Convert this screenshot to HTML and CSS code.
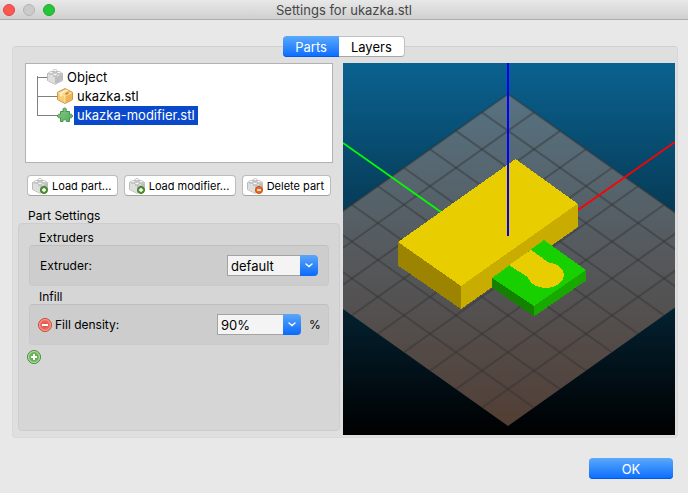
FILE: index.html
```html
<!DOCTYPE html>
<html lang="en">
<head>
<meta charset="utf-8">
<title>Settings for ukazka.stl</title>
<link rel="stylesheet" href="styles.css">
</head>
<body>
<svg class="defs" aria-hidden="true">
  <defs>
    <linearGradient id="sky" x1="0" y1="0" x2="0" y2="1">
      <stop offset="0" stop-color="#0a6290"/><stop offset="1" stop-color="#000"/>
    </linearGradient>
    <linearGradient id="puzzle-fill" x1="0" y1="0" x2="1" y2="1">
      <stop offset="0" stop-color="#86c888"/><stop offset="1" stop-color="#58ab5f"/>
    </linearGradient>
    <radialGradient id="red-fill"><stop offset="0" stop-color="#e2473c"/><stop offset="1" stop-color="#f07d70"/></radialGradient>
    <radialGradient id="green-fill"><stop offset="0" stop-color="#4c9c3c"/><stop offset="1" stop-color="#7fc36c"/></radialGradient>
    <symbol id="brick" viewBox="0 0 16 16">
      <path d="M.5 4.500 8 1.500l7.500 3v7L8 15.300.5 11.500z" fill="#f4f4f4" stroke="#ababab" stroke-width=".8"/>
      <path d="M1 5 8 8.500V15L1 11.300z" fill="#dedede"/>
      <path d="M15 5 8 8.500V15l7-3.700z" fill="#bdbdbd"/>
      <g fill="#d0d0d0" stroke="#a6a6a6" stroke-width=".5">
        <path d="M6 1.700v1.500c0 1.100 4 1.100 4 0V1.700"/><path d="M2 3.700V5c0 1.100 4 1.100 4 0V3.700"/><path d="M10 3.700V5c0 1.100 4 1.100 4 0V3.700"/><path d="M6 5.700v1.500c0 1.100 4 1.100 4 0V5.700"/>
      </g>
      <g fill="#fafafa" stroke="#a6a6a6" stroke-width=".5">
        <ellipse cx="8" cy="1.600" rx="2" ry="1.100"/><ellipse cx="4" cy="3.600" rx="2" ry="1.100"/><ellipse cx="12" cy="3.600" rx="2" ry="1.100"/><ellipse cx="8" cy="5.600" rx="2" ry="1.100"/>
      </g>
    </symbol>
    <symbol id="box" viewBox="0 0 16 16">
      <path d="M.6 4.300 8 .6l7.400 3.700v7.400L8 15.400.6 11.700z" fill="#f9d27f" stroke="#cc8d35" stroke-width="1"/>
      <path d="M1.100 4.700 8 8.200v6.600l-6.900-3.400z" fill="#f8cd78"/>
      <path d="M14.900 4.700 8 8.200v6.600l6.900-3.400z" fill="#efb552"/>
      <path d="M1.200 4.700 8 8.100l6.800-3.400M8 8.100v6.500" fill="none" stroke="#fdebbf" stroke-width=".8"/>
      <path d="M9.500 1.500 3 4.800v3l2 1V5.800l6.500-3.300z" fill="#fff0c8"/>
      <path d="M8.500 4.800l3-1.500v2.800l-3 1.500z" fill="#d8923a"/>
    </symbol>
    <symbol id="puzzle" viewBox="0 0 16 16">
      <path d="M3.500 4.500h3C5.300 2.500 6 1 7.600 1s2.300 1.500 1.100 3.500h3.800v3c1.500-.8 3 0 3 1.500s-1.500 2.300-3 1.500v4H9.400c.8-2.300-4.200-2.300-3.400 0H3.500v-4c-1.500.8-3 0-3-1.500s1.500-2.300 3-1.500z" fill="url(#puzzle-fill)" stroke="#3f974b"/>
    </symbol>
    <symbol id="badge-add" viewBox="0 0 8 8">
      <circle cx="4" cy="4" r="3.500" fill="#559a36" stroke="#3d7d25"/><path d="M4 2v4M2 4h4" stroke="#fff" stroke-width="1.400"/>
    </symbol>
    <symbol id="badge-remove" viewBox="0 0 8 8">
      <circle cx="4" cy="4" r="3.500" fill="#ee6a1c" stroke="#c8500f"/><path d="M2 4h4" stroke="#fff" stroke-width="1.500"/>
    </symbol>
    <symbol id="remove" viewBox="0 0 14 14">
      <circle cx="7" cy="7" r="6.500" fill="url(#red-fill)" stroke="#c4473d"/><circle cx="7" cy="7" r="5.500" fill="none" stroke="#f7b0a7" stroke-width=".7"/>
      <path d="M4 7h6" stroke="#fff" stroke-width="2"/>
    </symbol>
    <symbol id="add" viewBox="0 0 14 14">
      <circle cx="7" cy="7" r="6.500" fill="url(#green-fill)" stroke="#468a3b"/><circle cx="7" cy="7" r="5.500" fill="none" stroke="#c2e6b8" stroke-width=".8"/>
      <path d="M7 4v6M4 7h6" stroke="#fff" stroke-width="2"/>
    </symbol>
    <symbol id="chevron" viewBox="0 0 8 5"><path d="M1 1l3 2.500L7 1" fill="none" stroke="#fff" stroke-width="1.400" stroke-linecap="round"/></symbol>
  </defs>
</svg>

<header class="titlebar">
  <div class="lights">
    <button class="light close" aria-label="Close"></button>
    <button class="light minimize" aria-label="Minimize"></button>
    <button class="light expand" aria-label="Zoom"></button>
  </div>
  <h1>Settings for ukazka.stl</h1>
</header>

<nav class="tabs" role="tablist">
  <button class="tab active" role="tab" aria-selected="true">Parts</button>
  <button class="tab" role="tab" aria-selected="false">Layers</button>
</nav>

<main class="panel">
  <section class="side">
    <ul class="tree">
      <li class="root"><svg class="icon"><use href="#brick"/></svg><span class="name">Object</span></li>
      <li class="child"><svg class="icon"><use href="#box"/></svg><span class="name">ukazka.stl</span></li>
      <li class="child"><svg class="icon"><use href="#puzzle"/></svg><span class="name selected">ukazka-modifier.stl</span></li>
    </ul>

    <div class="actions">
      <button class="push"><span class="badged"><svg class="icon"><use href="#brick"/></svg><svg class="badge"><use href="#badge-add"/></svg></span>Load part...</button>
      <button class="push"><span class="badged"><svg class="icon"><use href="#brick"/></svg><svg class="badge"><use href="#badge-add"/></svg></span>Load modifier...</button>
      <button class="push"><span class="badged"><svg class="icon"><use href="#brick"/></svg><svg class="badge"><use href="#badge-remove"/></svg></span>Delete part</button>
    </div>

    <h2>Part Settings</h2>
    <div class="settings">
      <h3>Extruders</h3>
      <div class="group">
        <label for="extruder">Extruder:</label>
        <span class="combo wide">
          <select id="extruder"><option>default</option></select>
          <span class="arrow"><svg><use href="#chevron"/></svg></span>
        </span>
      </div>
      <h3>Infill</h3>
      <div class="group">
        <button class="round" aria-label="Remove fill density"><svg><use href="#remove"/></svg></button>
        <label for="density">Fill density:</label>
        <span class="combo">
          <input id="density" type="text" value="90%">
          <button class="arrow" aria-label="Show values"><svg><use href="#chevron"/></svg></button>
        </span>
        <span class="unit">%</span>
      </div>
      <button class="round add" aria-label="Add setting"><svg><use href="#add"/></svg></button>
    </div>
  </section>

  <svg class="scene" viewBox="0 0 332 372" preserveAspectRatio="xMidYMid slice" role="img" aria-label="3D preview">
    <rect width="332" height="372" fill="url(#sky)"/>
    <path d="M165 31 399 197 165 363-69 197z" fill="#cc9980" fill-opacity=".4"/>
    <g stroke="#333" stroke-opacity=".45" stroke-width="2">
      <path d="M165 31-69 197M191 49.400-43 215.400M217 67.900-17 233.900M243 86.300 9 252.300M269 104.800 35 270.800M295 123.200 61 289.200M321 141.700 87 307.700M347 160.100 113 326.100M373 178.600 139 344.600"/>
      <path d="M165 31 399 197M139 49.400 373 215.400M113 67.900 347 233.900M87 86.300 321 252.300M61 104.800 295 270.800M35 123.200 269 289.200M9 141.700 243 307.700M-17 160.100 217 326.100M-43 178.600 191 344.600"/>
    </g>
    <path d="M0 80 98 149" stroke="#0f0" stroke-width="1.800"/>
    <path d="M235 147 332 79" stroke="#f00" stroke-width="1.800"/>
    <g shape-rendering="crispEdges">
      <path d="M172.500 96 235 141 118 223 55 179z" fill="#e8cd00"/>
      <path d="M55 179 118 223v23L55 202.500z" fill="#9c8400"/>
      <path d="M235 140.500 118 223v23l117-82z" fill="#c8ac00"/>
      <path d="M201 177 243 207 191 243 149 215z" fill="#18d000"/>
      <path d="M149 215l42 28v10.500L149 224.500z" fill="#148200"/>
      <path d="M243 207l-52 36v10.500l52-36z" fill="#18a800"/>
      <path d="M188 187l17 12c2 1.400 4 1.300 6 1.700a18 12.800 0 1 1-25.500 15c-.500-1.500-1-2-3-3L166 202z" fill="#e8cd00"/>
    </g>
    <path d="M165 0v173" stroke="#00f" stroke-width="2"/>
  </svg>
</main>

<footer class="footer"><button class="ok">OK</button></footer>
</body>
</html>
```
FILE: styles.css
```css
* { box-sizing: border-box; }

body {
  margin: 0;
  min-height: 100vh;
  display: flex;
  flex-direction: column;
  background: #e8e8e8;
  color: #000;
  font-family: Inter, "Liberation Sans", sans-serif;
  font-size: 13px;
  line-height: 16px;
}

button, input, select { font: inherit; color: inherit; margin: 0; padding: 0; border: 0; }
h1, h2, h3, ul { margin: 0; padding: 0; font-weight: 400; }
svg { display: block; }
.defs { position: absolute; width: 0; height: 0; }
.icon { width: 16px; height: 16px; flex: none; }

.titlebar {
  display: grid;
  grid-template-columns: 1fr auto 1fr;
  align-items: center;
  height: 20px;
  background: linear-gradient(#e8e8e8, #d0d0d0);
  border-bottom: 1px solid #afafaf;
}
.titlebar h1 { font-size: 13px; color: #464646; }
.lights { display: flex; gap: 8px; padding-left: 3px; }
.light { width: 12px; height: 12px; border-radius: 50%; border: 1px solid; }
.close { background: #fd5754; border-color: #e0443f; }
.minimize { background: #cacaca; border-color: #b4b4b4; }
.expand { background: #25c63a; border-color: #1aab29; }

.tabs { display: flex; justify-content: center; margin-top: 16px; z-index: 1; }
.tab {
  height: 21px;
  padding: 0 12px;
  background: #fff;
  border: 1px solid #c0c0c0;
  border-bottom-color: #a6a6a6;
  border-left: 0;
}
.tab:first-child { border-radius: 4px 0 0 4px; }
.tab:last-child { border-radius: 0 4px 4px 0; }
.tab.active {
  color: #fff;
  background: linear-gradient(#5ba9fa, #0a6cff);
  border: 0;
  box-shadow: 0 -1px 0 #0457e8 inset;
}

.panel {
  flex: 1;
  display: grid;
  grid-template-columns: 322px 1fr;
  gap: 3px;
  margin: -11px 10px 0 12px;
  padding: 16px 2px 2px 5px;
  background: #dfdfdf;
  border: 1px solid #d2d2d2;
  border-color: #cfcfcf #d8d8d8 #dadada;
  border-radius: 4px;
}
.scene { width: 100%; height: 100%; min-height: 372px; }

.side { display: flex; flex-direction: column; padding-bottom: 4px; }

.tree {
  list-style: none;
  height: 100px;
  margin: 0 7px;
  padding: 4px 11px;
  background: #fff;
  border: 1px solid #b2b2b2;
}
.tree li { display: flex; align-items: center; height: 19px; }
.tree .icon { margin: -2px 0 0 -1px; }
.tree li::before {
  content: "";
  align-self: flex-start;
  flex: none;
  width: 20px;
  height: 20px;
  margin-top: -11px;
  border: solid #808080;
  border-width: 0 0 1px 1px;
}
.tree .root::before { width: 10px; height: 1px; margin-top: 8px; }
.name { margin-left: 1px; padding: 0 3px; line-height: 19px; }
.selected { background: #0a49cc; color: #fff; }

.actions { display: flex; justify-content: space-between; margin: 12px 9px 0; }
.push {
  display: flex;
  align-items: center;
  gap: 4px;
  height: 21px;
  padding: 0 6px 0 4px;
  font-size: 11px;
  white-space: nowrap;
  background: #fff;
  border: 1px solid #bcbcbc;
  border-bottom-color: #a4a4a4;
  border-radius: 4px;
}
.badged { position: relative; }
.badge { position: absolute; right: 0; bottom: 0; width: 8px; height: 8px; }

h2, h3, .group { font-size: 12px; }
h2 { margin: 12px 10px 0; line-height: 15px; }
.settings {
  flex: 1;
  padding: 7px 10px;
  background: #d6d6d6;
  border: 1px solid #cdcdcd;
  border-radius: 4px;
}
h3 { margin-left: 10px; line-height: 14px; }
.group {
  display: flex;
  align-items: center;
  height: 41px;
  padding: 0 10px;
  margin-bottom: 4px;
  background: #cdcdcd;
  border: 1px solid #c4c4c4;
  border-color: #bfbfbf #c8c8c8 #cacaca;
  border-radius: 4px;
}
.combo { display: flex; width: 84px; height: 21px; margin-left: auto; font-size: 13px; }
.combo.wide { width: 91px; }
.combo input, .combo select {
  flex: 1;
  min-width: 0;
  appearance: none;
  padding-left: 3px;
  background: #f4f4f4;
  border: 1px solid #a3a3a3;
  border-right: 0;
  border-radius: 0;
}
.arrow {
  display: grid;
  place-items: center;
  width: 18px;
  background: linear-gradient(#5aa6f8, #0a6afc);
  border-radius: 0 4px 4px 0;
}
.arrow svg { width: 8px; height: 5px; }
.unit { width: 17px; padding-left: 8px; }
.round { background: none; }
.round svg { width: 14px; height: 14px; }
.group .round { margin: 0 3px 0 -2px; }
.round.add { display: block; margin: 5px 0 0 -2px; }

.footer { display: flex; justify-content: flex-end; padding: 20px 15px 14px; }
.ok {
  width: 84px;
  height: 21px;
  color: #fff;
  background: linear-gradient(#5ba9fa, #0a6cff);
  border-radius: 4px;
  box-shadow: 0 -1px 0 #0457e8 inset;
}
```
